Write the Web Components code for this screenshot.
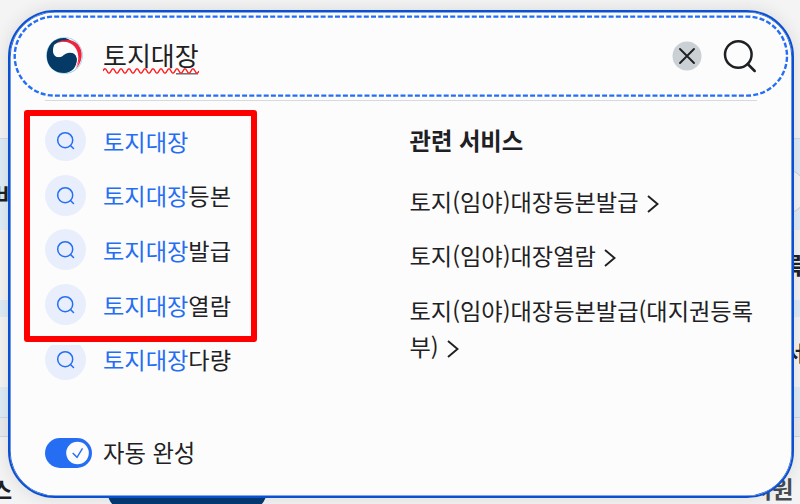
<!DOCTYPE html>
<html lang="ko">
<head>
<meta charset="UTF-8">
<title>통합검색</title>
<style>
    body {
        margin: 0;
        width: 800px;
        height: 504px;
        overflow: hidden;
        background: #f0f0f1;
        color: #1e2124;
        font-family: "Noto Sans CJK KR", "Noto Sans", sans-serif;
    }
</style>
</head>
<body>
<page-backdrop>
    <search-panel>
        <search-field slot="field" value="토지대장"></search-field>
        <suggest-item slot="suggest" keyword="토지대장"></suggest-item>
        <suggest-item slot="suggest" keyword="토지대장">등본</suggest-item>
        <suggest-item slot="suggest" keyword="토지대장">발급</suggest-item>
        <suggest-item slot="suggest" keyword="토지대장">열람</suggest-item>
        <suggest-item slot="suggest" keyword="토지대장">다량</suggest-item>
        <related-services slot="related" heading="관련 서비스">
            <related-link>토지(임야)대장등본발급</related-link>
            <related-link>토지(임야)대장열람</related-link>
            <related-link>토지(임야)대장등본발급(대지권등록부)</related-link>
        </related-services>
        <toggle-switch slot="footer">자동 완성</toggle-switch>
    </search-panel>
    <highlight-frame></highlight-frame>
</page-backdrop>

<script>
class PageBackdrop extends HTMLElement {
    constructor() {
        super();
        this.attachShadow({mode: "open"}).innerHTML = `
            <style>
                :host {
                    display: block;
                    position: relative;
                    box-sizing: border-box;
                    width: 800px;
                    height: 504px;
                    padding: 10px 6px 6px 8px;
                    overflow: hidden;
                }

                .scene {
                    position: absolute;
                    left: 0;
                    top: 0;
                }

                .word {
                    position: absolute;
                    font-size: 23px;
                    line-height: 30px;
                    font-weight: 700;
                    white-space: nowrap;
                }
            </style>
            <svg class="scene" width="800" height="504">
                <rect width="800" height="504" fill="#f4f4f5"/>
                <rect y="138" width="800" height="92" fill="#dfedf7"/>
                <rect y="138" width="800" height="1" fill="#cddcf0"/>
                <rect y="300" width="800" height="17" fill="#dfedf7"/>
                <rect y="387" width="800" height="30" fill="#dfedf7"/>
                <rect y="417" width="800" height="19" fill="#ebecef"/>
                <path d="M0 417.5h800M0 436.5h800" stroke="#cbdaf0"/>
                <circle cx="784" cy="191.500" r="22.500" fill="#f5f5f5" stroke="#cdcdd0"/>
                <path d="M105 488L109 499Q111 504 116 507H258Q263 504 265 499L270 488Z" fill="#063a74"/>
            </svg>
            <span class="word" style="left:-5px;top:179px">비</span>
            <span class="word" style="left:-9px;top:474px">스</span>
            <span class="word" style="left:782px;top:249px">록</span>
            <span class="word" style="left:785px;top:337px;font-size:21px">서</span>
            <span class="word" style="left:751px;top:473px;color:#464c53">지원</span>
            <slot></slot>
        `;
    }
}

class SearchPanel extends HTMLElement {
    constructor() {
        super();
        this.attachShadow({mode: "open"}).innerHTML = `
            <style>
                :host {
                    display: flex;
                    flex-direction: column;
                    position: relative;
                    box-sizing: border-box;
                    height: 488px;
                    padding: 3px 3px 0;
                    border: 2px solid #0b50d0;
                    border-radius: 47px;
                    background: #fcfcfc;
                    box-shadow: inset 0 0 0 0.600px #0b50d0, 0 0 18px rgba(0, 0, 0, 0.11);
                }

                .divider {
                    height: 1px;
                    margin: 3px 32px 0 32px;
                    background: #d8d9de;
                }

                .columns {
                    display: grid;
                    grid-template-columns: 364.500px 1fr;
                    padding: 19px 29px 0 32px;
                }

                .suggest {
                    display: flex;
                    flex-direction: column;
                    gap: 13.700px;
                }

                footer {
                    margin: auto 0 26px 32px;
                }
            </style>
            <slot name="field"></slot>
            <div class="divider"></div>
            <div class="columns">
                <div class="suggest"><slot name="suggest"></slot></div>
                <slot name="related"></slot>
            </div>
            <footer><slot name="footer"></slot></footer>
        `;
    }
}

class SearchField extends HTMLElement {
    constructor() {
        super();
        let wave = "M0 4";
        for (let x = 0; x < 94; x += 8) {
            wave += "q2 -4.500 4 0t4 0";
        }
        this.attachShadow({mode: "open"}).innerHTML = `
            <style>
                :host {
                    display: flex;
                    align-items: center;
                    position: relative;
                    box-sizing: border-box;
                    height: 82px;
                    padding: 0 32px 0 33px;
                }

                .ring {
                    position: absolute;
                    left: 0;
                    top: 0;
                }

                .logo {
                    flex: none;
                    margin-right: 19px;
                }

                .value {
                    position: relative;
                    flex: 1;
                    font-size: 26px;
                    line-height: 38px;
                    padding-bottom: 2px;
                }

                .spell {
                    position: absolute;
                    left: 0;
                    top: 31px;
                }

                .clear {
                    margin-right: 21px;
                }
            </style>
            <svg class="ring" width="776" height="84" fill="none">
                <rect x="1.700" y="1.600" width="772.300" height="79" rx="39.500" stroke="#256ef4" stroke-width="2.400" stroke-dasharray="5 2.200"/>
            </svg>
            <svg class="logo" width="38" height="38" viewBox="0 0 38 38">
                <circle cx="18.500" cy="18.500" r="18.300" fill="#8acbe4"/>
                <circle cx="18.500" cy="18.500" r="17.700" fill="#fcfcfc"/>
                <path d="M18 1C7 1 .8 9 .8 19C.8 30 9 36 18 36C26 36 31.500 29 31 22C30.500 16 24 14.500 20 18C16.500 21 12 21.500 9 19C4.500 14 8 6.500 15 5C20 3.800 25 5 28 8C25.500 3.500 21.500 1 18 1Z" fill="#063a66"/>
                <path d="M8 8C14 2.500 24 4 29 10C34 16 33 26 28 32C31.500 27 32 19 28 16C24 13 20.500 17 17 19.500C11 22.500 5 16 8 8Z" fill="#fcfcfc"/>
                <path d="M16 19.500C21 14 29 14.500 30.500 21C31.500 28 26 35 18 35.500L9 19.500C11.500 20.500 14 20.500 16 19.500Z" fill="#063a66"/>
                <path d="M8.500 8C15 1 27.500 2 32 12C35 20 33 27 29.500 32C37 25 37.500 14 32 7.500C27 2 15 0 8.500 8Z" fill="#f0223d"/>
                <path d="M9 7.500C15 3 24 4.500 28.500 9.500C33 15 33.500 23 30 30C35 23 35.500 15 31.500 9C27 3 16 1.500 9 7.500Z" fill="#f0223d"/>
            </svg>
            <div class="value">${this.getAttribute("value")}
                <svg class="spell" width="96" height="9" fill="none">
                    <path d="M73 6.800h22" stroke="#555b62" stroke-width="1.300"/>
                    <path d="${wave}" stroke="#f22" stroke-width="1.500"/>
                </svg>
            </div>
            <svg class="clear" width="30" height="30" fill="none">
                <circle cx="15" cy="15" r="14.500" fill="#cbd0d4"/>
                <path d="M8 8l14 14M22 8L8 22" stroke="#1e2124" stroke-width="1.900" stroke-linecap="round"/>
            </svg>
            <svg width="34" height="34" fill="none" stroke="#1e2124" stroke-width="2.500" stroke-linecap="round">
                <circle cx="15.300" cy="15.500" r="13.300"/>
                <path d="M24.700 25l7 7"/>
            </svg>
        `;
    }
}

class SuggestItem extends HTMLElement {
    constructor() {
        super();
        this.attachShadow({mode: "open"}).innerHTML = `
            <style>
                :host {
                    display: flex;
                    align-items: center;
                    gap: 17px;
                    height: 41px;
                    font-size: 23.200px;
                    line-height: 40px;
                    white-space: nowrap;
                }

                svg {
                    flex: none;
                }

                b {
                    font-weight: 400;
                    color: #256ef4;
                }
            </style>
            <svg width="41" height="41" fill="none">
                <circle cx="20.500" cy="20.500" r="20.500" fill="#e8eefb"/>
                <g stroke="#256ef4" stroke-width="1.500" stroke-linecap="round">
                    <circle cx="20.200" cy="20.200" r="7.500"/>
                    <path d="M25.500 25.500l3 3"/>
                </g>
            </svg>
            <span><b>${this.getAttribute("keyword")}</b><slot></slot></span>
        `;
    }
}

class RelatedServices extends HTMLElement {
    constructor() {
        super();
        this.attachShadow({mode: "open"}).innerHTML = `
            <style>
                :host {
                    display: block;
                }

                h2 {
                    margin: 0 0 21.500px;
                    font-size: 23.300px;
                    line-height: 41px;
                    font-weight: 700;
                }

                .links {
                    display: flex;
                    flex-direction: column;
                    gap: 18px;
                }
            </style>
            <h2>${this.getAttribute("heading")}</h2>
            <div class="links"><slot></slot></div>
        `;
    }
}

class RelatedLink extends HTMLElement {
    constructor() {
        super();
        this.attachShadow({mode: "open"}).innerHTML = `
            <style>
                :host {
                    display: block;
                    font-size: 23.200px;
                    line-height: 36.500px;
                    word-break: break-all;
                }

                svg {
                    margin-left: 4px;
                    vertical-align: -3px;
                }
            </style>
            <slot></slot><svg width="18" height="20" fill="none" stroke="#1e2124" stroke-width="1.900">
                <path d="M5 2l9.500 8L5 18"/>
            </svg>
        `;
    }
}

class ToggleSwitch extends HTMLElement {
    constructor() {
        super();
        this.attachShadow({mode: "open"}).innerHTML = `
            <style>
                :host {
                    display: flex;
                    align-items: center;
                    gap: 11px;
                    font-size: 23.300px;
                    line-height: 36px;
                }

                svg {
                    position: relative;
                    top: 1px;
                }
            </style>
            <svg width="47" height="30" fill="none">
                <rect width="47" height="30" rx="15" fill="#256ef4"/>
                <circle cx="32.500" cy="15" r="11.300" fill="#fcfcfc"/>
                <path d="M27.700 15l4.300 4.300 5.500-9" stroke="#256ef4" stroke-width="1.400"/>
            </svg>
            <slot></slot>
        `;
    }
}

// red marker drawn over the first four suggestions
class HighlightFrame extends HTMLElement {
    constructor() {
        super();
        this.attachShadow({mode: "open"}).innerHTML = `
            <style>
                :host {
                    display: block;
                    position: absolute;
                    left: 24px;
                    top: 110px;
                    box-sizing: border-box;
                    width: 233px;
                    height: 232px;
                    border: 6px solid #f00;
                    border-radius: 3px;
                    box-shadow: 0 3px 0 #fcfcfc;
                }
            </style>
        `;
    }
}

customElements.define("page-backdrop", PageBackdrop);
customElements.define("search-panel", SearchPanel);
customElements.define("search-field", SearchField);
customElements.define("suggest-item", SuggestItem);
customElements.define("related-services", RelatedServices);
customElements.define("related-link", RelatedLink);
customElements.define("toggle-switch", ToggleSwitch);
customElements.define("highlight-frame", HighlightFrame);
</script>
</body>
</html>
